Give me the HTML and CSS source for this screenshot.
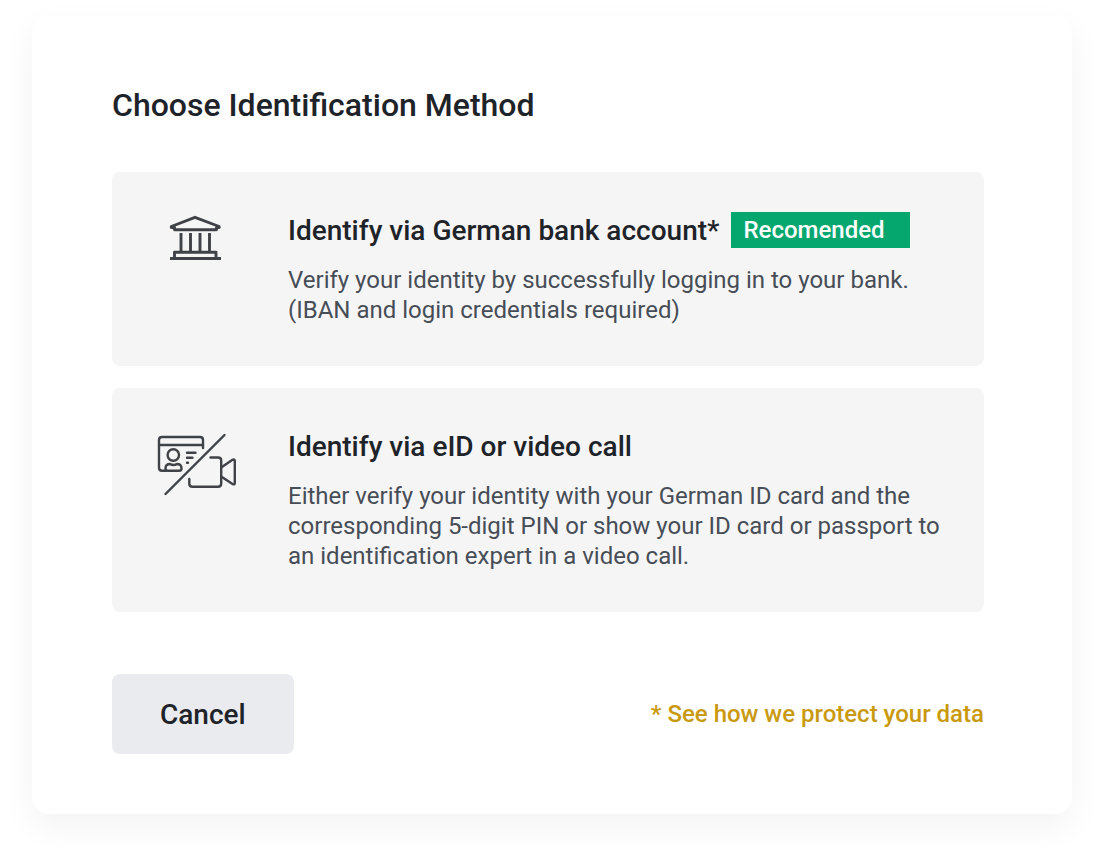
FILE: index.html
```html
<!DOCTYPE html>
<html lang="en">
<head>
    <meta charset="UTF-8">
    <meta name="viewport" content="width=device-width, initial-scale=1.0">
    <title>Choose Identification Method</title>
    <link rel="stylesheet" href="styles.css">
</head>
<body>
    <main class="dialog">
        <h1>Choose Identification Method</h1>

        <div class="options">
            <button type="button" class="option">
                <svg class="option-icon" viewBox="0 0 84 72" aria-hidden="true">
                    <path d="M18.500 17.700V15.500H15.300V14.500L39 5.300L63.200 14.500V15.500H60.500V17.700Z"/>
                    <path d="M25 21V39M34.500 21V39M44 21V39M53.500 21V39"/>
                    <path d="M18.500 46V40.200H60V46"/>
                    <path d="M14 46.500H65"/>
                </svg>
                <span class="option-body">
                    <span class="option-head">
                        <span class="option-title">Identify via German bank account*</span>
                        <span class="badge">Recomended</span>
                    </span>
                    <span class="option-text">Verify your identity by successfully logging in to your bank. (IBAN and login credentials required)</span>
                </span>
            </button>

            <button type="button" class="option">
                <svg class="option-icon thin" viewBox="0 0 84 72" aria-hidden="true">
                    <!-- id card -->
                    <path d="M10 42.800H6Q3 42.800 3 39.800V12Q3 9 6 9H44Q47 9 47 12V20"/>
                    <path d="M3 17H47"/>
                    <circle cx="17.300" cy="27" r="5.700"/>
                    <path d="M12 42.800Q9.500 42.800 9.500 40.500Q9.500 36 14 36Q17.500 38 21 36Q25.500 36 25.500 40.500Q25.500 42.800 23 42.800Z"/>
                    <path d="M31 24.800H39.500M31 29.800H36.500M31 34.800H32"/>
                    <!-- divider -->
                    <path d="M9.500 66L68.500 7"/>
                    <!-- camera -->
                    <path d="M54.500 29.500H62Q65.200 29.500 65.200 32.500V55.500Q65.200 58.800 62 58.800H36.500Q33.300 58.800 33.300 55.500V51"/>
                    <path d="M65.200 39.500L76.500 31.800Q78.800 30.800 78.800 33V55Q78.800 57.200 76.500 56L65.200 48.500"/>
                </svg>
                <span class="option-body">
                    <span class="option-head">
                        <span class="option-title">Identify via eID or video call</span>
                    </span>
                    <span class="option-text">Either verify your identity with your German ID card and the corresponding 5-digit PIN or show your ID card or passport to an identification expert in a video call.</span>
                </span>
            </button>
        </div>

        <div class="actions">
            <button type="button" class="cancel-btn">Cancel</button>
            <a class="privacy-link" href="#privacy">* See how we protect your data</a>
        </div>
    </main>
</body>
</html>
```
FILE: styles.css
```css
* {
    box-sizing: border-box;
}
body {
    margin: 0;
    padding: 16px 32px 48px;
    background-color: #fff;
    font-family: Roboto, sans-serif;
    color: #1e2329;
}
.dialog {
    max-width: 1200px;
    margin: 0 auto;
    padding: 70px 88px 60px 80px;
    background-color: #fff;
    border-radius: 16px;
    box-shadow: 0 12px 32px rgba(0, 0, 0, 0.05);
}
h1 {
    margin: 0 0 48px;
    font-size: 32px;
    line-height: 38px;
    font-weight: 500;
}
button {
    border: none;
    border-radius: 8px;
    font-family: inherit;
    color: inherit;
    cursor: pointer;
}
.options {
    display: flex;
    flex-direction: column;
    gap: 22px;
}
.option {
    display: flex;
    align-items: flex-start;
    gap: 48px;
    width: 100%;
    padding: 40px 40px 41px 44px;
    background-color: #f5f5f5;
    text-align: left;
}
.option:hover {
    background-color: #f0f0f0;
}
.option-icon {
    flex: none;
    width: 84px;
    height: 72px;
    fill: none;
    stroke: #3f4347;
    stroke-width: 2.9;
    stroke-linejoin: round;
}
.option-icon.thin {
    stroke-width: 2.4;
    stroke-linecap: round;
}
.option-body {
    flex: 1;
    display: flex;
    flex-direction: column;
    gap: 15px;
}
.option-head {
    display: flex;
    align-items: flex-start;
    gap: 12px;
}
.option-title {
    font-size: 28px;
    line-height: 38px;
    font-weight: 500;
}
.badge {
    padding: 0 25px 0 12px;
    background-color: #05a76f;
    color: #fff;
    font-size: 24px;
    line-height: 36px;
    font-weight: 500;
}
.option-text {
    font-size: 24px;
    line-height: 30px;
    color: #474d57;
}
.actions {
    display: flex;
    justify-content: space-between;
    align-items: center;
    margin-top: 62px;
}
.cancel-btn {
    padding: 22px 48px 20px;
    background-color: #eaebef;
    font-size: 28px;
    line-height: 38px;
    font-weight: 500;
}
.cancel-btn:hover {
    background-color: #dfe0e5;
}
.privacy-link {
    font-size: 24px;
    line-height: 30px;
    font-weight: 500;
    color: #c99a10;
    text-decoration: none;
}
```
